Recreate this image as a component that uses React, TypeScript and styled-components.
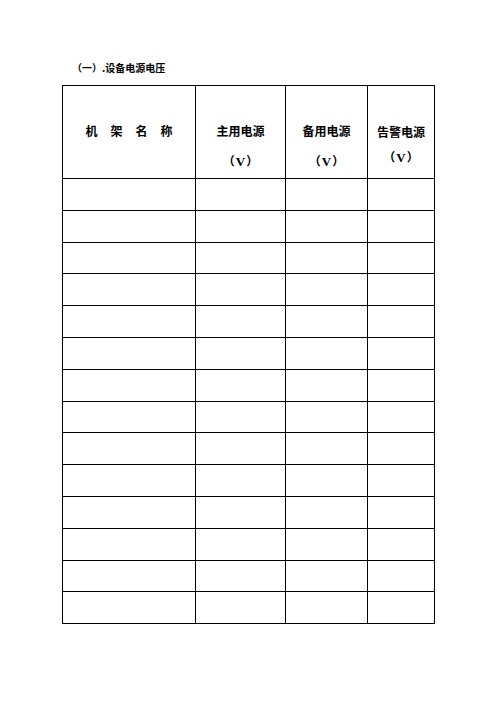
import React from "react"
import styled, { createGlobalStyle } from "styled-components"

const GlobalStyle = createGlobalStyle`
  html, body {
    margin: 0;
    padding: 0;
    background: #fff;
  }
  body {
    font-family: "Liberation Serif", "Noto Sans CJK SC", serif;
    color: #000;
  }
`

const Page = styled.div`
  width: 496px;
  height: 702px;
  padding: 62px 0 0 62px;
  box-sizing: border-box;
`

const Title = styled.div`
  font-family: "Noto Sans CJK SC", sans-serif;
  font-size: 10px;
  font-weight: 700;
  line-height: 12px;
  height: 23px;
  padding-left: 10px;
  box-sizing: border-box;
`

const Sheet = styled.table`
  border-collapse: collapse;
  table-layout: fixed;
  width: 373px;
  border: 1.4px solid #000;
`

const Col = styled.col<{ $w: number }>`
  width: ${p => p.$w}px;
`

const HeadCell = styled.th<{ $lh: number }>`
  border: 1.4px solid #000;
  height: 93px;
  vertical-align: top;
  padding: ${p => 45 - p.$lh / 2}px 0 0;
  font-family: "Noto Sans CJK SC", sans-serif;
  font-size: 12px;
  font-weight: 700;
  line-height: ${p => p.$lh}px;
  text-align: center;
  box-sizing: border-box;
`

const Spaced = styled.span`
  letter-spacing: 13px;
  margin-right: -13px;
`

const Unit = styled.span`
  font-family: "Liberation Serif", serif;
  font-size: 13px;
  font-weight: 700;
  margin: 0 1px;
`

const Cell = styled.td`
  border: 1.4px solid #000;
  height: 31.8px;
  padding: 0;
  box-sizing: border-box;
`

const columns = [133, 90, 82, 67]
const rows = Array.from({ length: 14 }, (_, i) => i)

export default function App() {
  return (
    <>
      <GlobalStyle />
      <Page>
        <Title>（一）.设备电源电压</Title>
        <Sheet>
          <colgroup>
            {columns.map((w, i) => <Col key={i} $w={w} />)}
          </colgroup>
          <thead>
            <tr>
              <HeadCell $lh={30}><Spaced>机架名称</Spaced></HeadCell>
              <HeadCell $lh={30}>主用电源<br />（<Unit>V</Unit>）</HeadCell>
              <HeadCell $lh={30}>备用电源<br />（<Unit>V</Unit>）</HeadCell>
              <HeadCell $lh={25}>告警电源<br />（<Unit>V</Unit>）</HeadCell>
            </tr>
          </thead>
          <tbody>
            {rows.map(r => (
              <tr key={r}>
                {columns.map((_, c) => <Cell key={c} />)}
              </tr>
            ))}
          </tbody>
        </Sheet>
      </Page>
    </>
  )
}
